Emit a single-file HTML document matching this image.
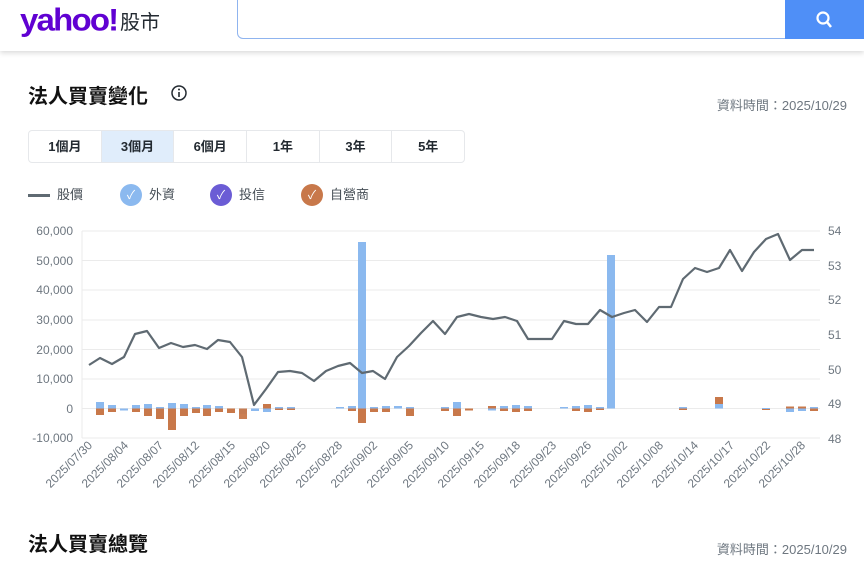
<!DOCTYPE html>
<html><head><meta charset="utf-8">
<style>
*{margin:0;padding:0;box-sizing:border-box}
body{width:864px;height:566px;overflow:hidden;background:#fff;font-family:"Liberation Sans","Noto Sans CJK TC",sans-serif;position:relative;color:#232a31}
.hdr{position:absolute;left:0;top:0;width:864px;height:51px;background:#fff;box-shadow:0 2px 5px rgba(0,0,0,.15)}
.logo{position:absolute;left:20px;top:1px;font-size:33px;font-weight:bold;color:#6001d2;letter-spacing:-1.8px;transform:scaleY(0.95)}
.logo2{position:absolute;left:120px;top:6px;font-size:20px;color:#232a31}
.search{position:absolute;left:237px;top:-2px;width:550px;height:41px;border:1px solid #8fb4ef;border-radius:0 0 0 6px}
.btn{position:absolute;left:785px;top:0;width:79px;height:39px;background:#4f8ff7}
.t{position:absolute;font-size:20px;font-weight:bold;color:#111}
.d{position:absolute;right:17px;font-size:13px;color:#6e7780}
.tabs{position:absolute;left:28px;top:130px;width:437px;height:33px;border:1px solid #e6e8eb;border-radius:4px;display:flex}
.tabs div{flex:1;border-right:1px solid #e6e8eb;font-size:13px;font-weight:bold;text-align:center;line-height:31px;color:#232a31}
.tabs div:last-child{border:none}
.tabs .on{background:#e0edfb}
.lg{position:absolute;top:184px;font-size:13px;color:#464e56;line-height:22px}
.dot{position:absolute;top:184px;width:22px;height:22px;border-radius:50%;color:#fff;font-size:12px;text-align:center;line-height:22px}
</style></head><body>
<div class="hdr">
<div class="logo">yahoo!</div><div class="logo2">股市</div>
<div class="search"></div>
<div class="btn"><svg width="79" height="39"><circle cx="38" cy="18" r="5.5" fill="none" stroke="#fff" stroke-width="2.2"/><line x1="42" y1="22" x2="46" y2="27" stroke="#fff" stroke-width="2.5"/></svg></div>
</div>
<div class="t" style="left:28px;top:80px">法人買賣變化</div>
<svg style="position:absolute;left:170px;top:84px" width="18" height="18"><circle cx="9" cy="9" r="7" fill="none" stroke="#232a31" stroke-width="1.5"/><line x1="9" y1="8" x2="9" y2="13" stroke="#232a31" stroke-width="1.6"/><circle cx="9" cy="5.5" r="1" fill="#232a31"/></svg>
<div class="d" style="top:95px">資料時間：2025/10/29</div>
<div class="tabs"><div>1個月</div><div class="on">3個月</div><div>6個月</div><div>1年</div><div>3年</div><div>5年</div></div>
<div style="position:absolute;left:28px;top:194px;width:22px;height:3px;background:#5f6a72"></div>
<div class="lg" style="left:57px">股價</div>
<div class="dot" style="left:120px;background:#8bb9ef">✓</div><div class="lg" style="left:149px">外資</div>
<div class="dot" style="left:210px;background:#6b5cd5">✓</div><div class="lg" style="left:239px">投信</div>
<div class="dot" style="left:301px;background:#c8784a">✓</div><div class="lg" style="left:330px">自營商</div>
<svg style="position:absolute;left:0;top:220px" width="864" height="290">
<g transform="translate(0,-220)">
<g stroke="#ebebeb" stroke-width="1">
<line x1="82" x2="820" y1="231" y2="231"/><line x1="82" x2="820" y1="260.5" y2="260.5"/><line x1="82" x2="820" y1="290" y2="290"/><line x1="82" x2="820" y1="320" y2="320"/><line x1="82" x2="820" y1="349.5" y2="349.5"/><line x1="82" x2="820" y1="379" y2="379"/><line x1="82" x2="820" y1="408.5" y2="408.5"/><line x1="82" x2="820" y1="438" y2="438"/><line x1="82" x2="82" y1="231" y2="438"/>
</g>
<g font-size="12" fill="#6e7780" text-anchor="end" font-family="Liberation Sans,sans-serif">
<text x="73" y="235">60,000</text><text x="73" y="265">50,000</text><text x="73" y="294">40,000</text><text x="73" y="324">30,000</text><text x="73" y="354">20,000</text><text x="73" y="383">10,000</text><text x="73" y="413">0</text><text x="73" y="442">-10,000</text>
</g>
<g font-size="12" fill="#6e7780" font-family="Liberation Sans,sans-serif">
<text x="828" y="235">54</text><text x="828" y="270">53</text><text x="828" y="304">52</text><text x="828" y="339">51</text><text x="828" y="374">50</text><text x="828" y="408">49</text><text x="828" y="443">48</text>
</g>
<g fill="#8bb9ef">
<rect x="96" y="402" width="8" height="6.5"/><rect x="108" y="405" width="8" height="3.5"/><rect x="120" y="408.5" width="8" height="2"/><rect x="132" y="405" width="8" height="3.5"/><rect x="144" y="404" width="8" height="4.5"/><rect x="156" y="407" width="8" height="1.5"/><rect x="168" y="403" width="8" height="5.5"/><rect x="180" y="404" width="8" height="4.5"/><rect x="192" y="407" width="8" height="1.5"/><rect x="203" y="405" width="8" height="3.5"/><rect x="215" y="406" width="8" height="2.5"/><rect x="239" y="408.5" width="8" height="5.5"/><rect x="251" y="408.5" width="8" height="2.5"/><rect x="263" y="408.5" width="8" height="3.5"/><rect x="275" y="407" width="8" height="1.5"/><rect x="287" y="407" width="8" height="1.5"/><rect x="336" y="407" width="8" height="1.5"/><rect x="348" y="406" width="8" height="2.5"/><rect x="358" y="242" width="8" height="166.5"/><rect x="370" y="407" width="8" height="1.5"/><rect x="382" y="406" width="8" height="2.5"/><rect x="394" y="406" width="8" height="2.5"/><rect x="406" y="407" width="8" height="1.5"/><rect x="441" y="407" width="8" height="1.5"/><rect x="453" y="402" width="8" height="6.5"/><rect x="488" y="408.5" width="8" height="2"/><rect x="500" y="406" width="8" height="2.5"/><rect x="512" y="405" width="8" height="3.5"/><rect x="524" y="406" width="8" height="2.5"/><rect x="560" y="407" width="8" height="1.5"/><rect x="572" y="406" width="8" height="2.5"/><rect x="584" y="405" width="8" height="3.5"/><rect x="596" y="407" width="8" height="1.5"/><rect x="607" y="255" width="8" height="153.5"/><rect x="679" y="407" width="8" height="1.5"/><rect x="715" y="404" width="8" height="4.5"/><rect x="762" y="408" width="8" height="1"/><rect x="786" y="408.5" width="8" height="3.5"/><rect x="798" y="408.5" width="8" height="2.5"/><rect x="810" y="407" width="8" height="1.5"/>
</g>
<g fill="#c8784a">
<rect x="96" y="408.5" width="8" height="6.5"/><rect x="108" y="408.5" width="8" height="3.5"/><rect x="132" y="408.5" width="8" height="3.5"/><rect x="144" y="408.5" width="8" height="7.5"/><rect x="156" y="408.5" width="8" height="10.5"/><rect x="168" y="408.5" width="8" height="21.5"/><rect x="180" y="408.5" width="8" height="7.5"/><rect x="192" y="408.5" width="8" height="4.5"/><rect x="203" y="408.5" width="8" height="7.5"/><rect x="215" y="408.5" width="8" height="3.5"/><rect x="227" y="408.5" width="8" height="4.5"/><rect x="239" y="408.5" width="8" height="10.5" opacity=".95"/><rect x="263" y="404" width="8" height="4.5"/><rect x="275" y="408.5" width="8" height="1.5"/><rect x="287" y="408.5" width="8" height="1.5"/><rect x="348" y="408.5" width="8" height="2.5"/><rect x="358" y="408.5" width="8" height="14.5"/><rect x="370" y="408.5" width="8" height="3.5"/><rect x="382" y="408.5" width="8" height="3.5"/><rect x="406" y="408.5" width="8" height="7.5"/><rect x="441" y="408.5" width="8" height="2.5"/><rect x="453" y="408.5" width="8" height="7.5"/><rect x="465" y="408.5" width="8" height="2"/><rect x="488" y="406" width="8" height="2.5"/><rect x="500" y="408.5" width="8" height="2.5"/><rect x="512" y="408.5" width="8" height="3.5"/><rect x="524" y="408.5" width="8" height="2.5"/><rect x="572" y="408.5" width="8" height="2.5"/><rect x="584" y="408.5" width="8" height="3.5"/><rect x="596" y="408.5" width="8" height="1.5"/><rect x="679" y="408.5" width="8" height="1.5"/><rect x="715" y="397" width="8" height="7"/><rect x="762" y="409" width="8" height="1"/><rect x="786" y="406.5" width="8" height="2"/><rect x="798" y="406.5" width="8" height="2"/><rect x="810" y="408.5" width="8" height="2.5"/>
</g>
<polyline fill="none" stroke="#5f6a72" stroke-width="2.2" stroke-linejoin="round" points="89,365 100,358 112,364 124,357 135,334 147,331 159,348 171,343 183,347 195,345 207,349 218,340 230,342 242,357 254,405 266,389 278,372 290,371 302,373 314,381 326,371 338,366 350,363 362,373 373,371 385,379 397,357 409,346 421,333 433,321 445,334 457,317 469,314 481,317 493,319 505,317 517,321 528,339 540,339 552,339 564,321 576,324 588,324 600,310 612,317 624,313 635,310 647,322 659,307 671,307 683,279 695,268 707,272 719,268 730,250 742,271 754,252 766,239 778,234 790,260 802,250 814,250"/>
<g font-size="12" fill="#6e7780" text-anchor="end" font-family="Liberation Sans,sans-serif">
<text transform="translate(93,446) rotate(-45)">2025/07/30</text>
<text transform="translate(129,446) rotate(-45)">2025/08/04</text>
<text transform="translate(164,446) rotate(-45)">2025/08/07</text>
<text transform="translate(200,446) rotate(-45)">2025/08/12</text>
<text transform="translate(236,446) rotate(-45)">2025/08/15</text>
<text transform="translate(271,446) rotate(-45)">2025/08/20</text>
<text transform="translate(307,446) rotate(-45)">2025/08/25</text>
<text transform="translate(343,446) rotate(-45)">2025/08/28</text>
<text transform="translate(378,446) rotate(-45)">2025/09/02</text>
<text transform="translate(414,446) rotate(-45)">2025/09/05</text>
<text transform="translate(450,446) rotate(-45)">2025/09/10</text>
<text transform="translate(485,446) rotate(-45)">2025/09/15</text>
<text transform="translate(521,446) rotate(-45)">2025/09/18</text>
<text transform="translate(557,446) rotate(-45)">2025/09/23</text>
<text transform="translate(592,446) rotate(-45)">2025/09/26</text>
<text transform="translate(628,446) rotate(-45)">2025/10/02</text>
<text transform="translate(664,446) rotate(-45)">2025/10/08</text>
<text transform="translate(699,446) rotate(-45)">2025/10/14</text>
<text transform="translate(735,446) rotate(-45)">2025/10/17</text>
<text transform="translate(771,446) rotate(-45)">2025/10/22</text>
<text transform="translate(806,446) rotate(-45)">2025/10/28</text>
</g>
</g>
</svg>
<div class="t" style="left:28px;top:528px">法人買賣總覽</div>
<div class="d" style="top:539px">資料時間：2025/10/29</div>
</body></html>
